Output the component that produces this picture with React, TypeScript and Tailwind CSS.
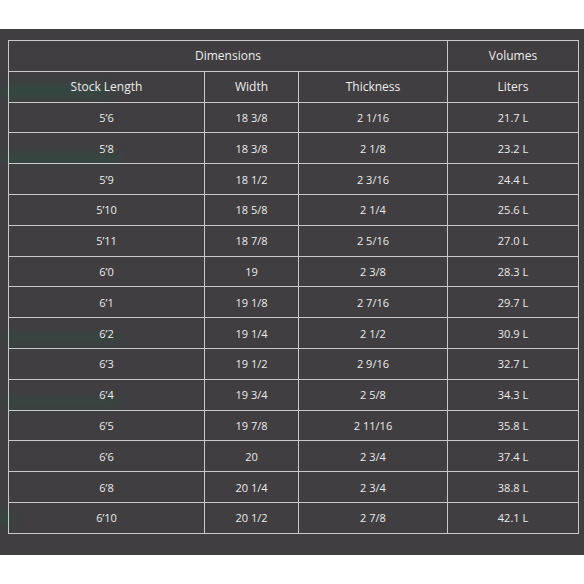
import React from "react";

const rows = [
  ["5'6", "18 3/8", "2 1/16", "21.7 L"],
  ["5'8", "18 3/8", "2 1/8", "23.2 L"],
  ["5'9", "18 1/2", "2 3/16", "24.4 L"],
  ["5'10", "18 5/8", "2 1/4", "25.6 L"],
  ["5'11", "18 7/8", "2 5/16", "27.0 L"],
  ["6'0", "19", "2 3/8", "28.3 L"],
  ["6'1", "19 1/8", "2 7/16", "29.7 L"],
  ["6'2", "19 1/4", "2 1/2", "30.9 L"],
  ["6'3", "19 1/2", "2 9/16", "32.7 L"],
  ["6'4", "19 3/4", "2 5/8", "34.3 L"],
  ["6'5", "19 7/8", "2 11/16", "35.8 L"],
  ["6'6", "20", "2 3/4", "37.4 L"],
  ["6'8", "20 1/4", "2 3/4", "38.8 L"],
  ["6'10", "20 1/2", "2 7/8", "42.1 L"],
];

const cell = "border border-[#c9c9c9] h-[30.8px] p-0 text-center align-middle";

const App = () => {
  return (
    <div className="w-[584px] h-[584px] bg-white pt-[29px] font-['Open_Sans',sans-serif]">
      <div className="relative h-[526px] bg-[#403e40] pt-[11px] pl-[8px] overflow-hidden">
        {/* blurred green streaks behind the table */}
        <div className="absolute left-0 top-[58px] w-[110px] h-[8px] bg-[#1d5a42] blur-[6px] opacity-60" />
        <div className="absolute left-0 top-[126px] w-[120px] h-[6px] bg-[#1d5a42] blur-[5px] opacity-60" />
        <div className="absolute left-0 top-[306px] w-[120px] h-[6px] bg-[#1d5a42] blur-[5px] opacity-50" />
        <div className="absolute left-0 top-[370px] w-[120px] h-[6px] bg-[#1d5a42] blur-[5px] opacity-50" />
        <div className="absolute left-0 top-[486px] w-[14px] h-[8px] bg-[#1d5a42] blur-[5px] opacity-60" />

        <table className="relative border-collapse text-[#ececec] text-[11px] leading-none">
          <colgroup>
            <col className="w-[196px]" />
            <col className="w-[94px]" />
            <col className="w-[149px]" />
            <col className="w-[131px]" />
          </colgroup>
          <thead className="text-[12px]">
            <tr>
              <th colSpan={3} className={cell + " font-medium"}>
                Dimensions
              </th>
              <th className={cell + " font-medium"}>Volumes</th>
            </tr>
            <tr>
              <th className={cell + " font-medium"}>Stock Length</th>
              <th className={cell + " font-medium"}>Width</th>
              <th className={cell + " font-medium"}>Thickness</th>
              <th className={cell + " font-medium"}>Liters</th>
            </tr>
          </thead>
          <tbody>
            {rows.map((r, i) => (
              <tr key={i}>
                {r.map((v, j) => (
                  <td key={j} className={cell}>
                    {v.replace("'", "\u2019")}
                  </td>
                ))}
              </tr>
            ))}
          </tbody>
        </table>
      </div>
    </div>
  );
};

export default App;
